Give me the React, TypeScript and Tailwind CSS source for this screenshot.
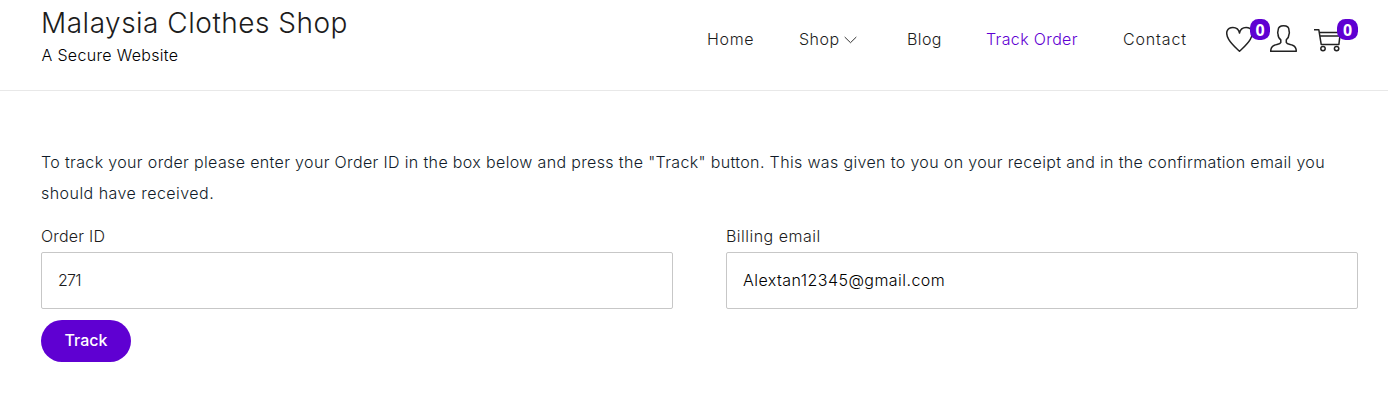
import type { ReactNode } from "react";

function CountBadge({ className, count }: { className: string; count: number }) {
  return (
    <span
      className={`absolute flex h-[21px] items-center justify-center rounded-[8.5px] bg-[#5f00d2] font-['Open_Sans',sans-serif] text-[16px] leading-none font-bold text-white ${className}`}
    >
      {count}
    </span>
  );
}

function IconLink({ label, className, children }: { label: string; className: string; children: ReactNode }) {
  return (
    <a href="#" aria-label={label} className={`relative block h-[28px] ${className}`}>
      {children}
    </a>
  );
}

function HeartIcon() {
  return (
    <svg width="28" height="28" viewBox="0 0 28 28" fill="none" stroke="#222" strokeWidth="1.5" strokeLinejoin="round">
      <path d="M13.5 26.3C10.4 23.2 5.4 19 2.7 14.3C.9 11.2.2 8.5 1.1 6.1C2 3.7 4.2 2.5 6.9 2.5C10.2 2.5 12.8 4.6 13.5 8.1C14.2 4.6 16.8 2.5 20.1 2.5C22.8 2.5 25 3.7 25.9 6.1C26.8 8.5 26.1 11.2 24.3 14.3C21.6 19 16.6 23.2 13.5 26.3Z" />
    </svg>
  );
}

function UserIcon() {
  return (
    <svg width="28" height="28" viewBox="0 0 28 28" fill="none" stroke="#222" strokeWidth="1.5" strokeLinejoin="round">
      <path d="M10.8 14.8C8.7 13.2 8 11 8 8.9C7.2 7.6 8.1 6.8 8.1 5.2C8.3 2.4 10.4.8 13.5.8C17 .8 19 2.4 19 5.2C19 6.8 19.8 7.6 19.1 8.9C19 11.4 18.1 13.2 16.3 14.8V17.4C17 19.4 20.2 19.2 22.6 20.2C25.5 21.4 26.3 23.6 26.3 26.3H.7C.7 23.6 1.5 21.4 4.4 20.2C6.8 19.2 10.1 19.4 10.8 17.4Z" />
    </svg>
  );
}

function CartIcon() {
  return (
    <svg width="28" height="28" viewBox="0 0 28 28" fill="none" stroke="#222" strokeWidth="1.5" strokeLinejoin="round">
      <path d="M0 4.7H4.8L7.2 19.4H24.9L26.3 7.5H5.4M5.9 11H26" />
      <circle cx="9" cy="23.6" r="2.2" />
      <circle cx="22.6" cy="23.6" r="2.2" />
    </svg>
  );
}

export default function App() {
  return (
    <div className="min-h-[401px] bg-white font-['Inter',sans-serif] text-[16px] font-light text-[#1c1c1c]">
      <header className="flex h-[91px] items-start border-b border-[#e8e8e8] pl-[41px]">
        <div className="w-[666px] pt-[7px]">
          <h1 className="text-[28px] leading-[33px] tracking-[0.5px]">Malaysia Clothes Shop</h1>
          <p className="mt-[5px] pl-[0.5px] leading-[21px] tracking-[0.32px] text-black">A Secure Website</p>
        </div>
        <nav className="flex pt-[27px] leading-[25px] whitespace-nowrap">
          <a href="#" className="w-[92px] tracking-[0.65px]">Home</a>
          <a href="#" className="flex w-[108px] items-center tracking-[0.5px]">
            Shop
            <svg className="ml-[4px]" width="13" height="8" viewBox="0 0 13 8" fill="none" stroke="#333" strokeWidth="1">
              <path d="M.7 1L6.5 6.7L12.3 1" />
            </svg>
          </a>
          <a href="#" className="w-[79px] tracking-[0.4px]">Blog</a>
          <a href="#" className="w-[137px] tracking-[0.35px] text-[#5f00d2]">Track Order</a>
          <a href="#" className="w-[103px] tracking-[0.85px]">Contact</a>
        </nav>
        <div className="flex pt-[25px]">
          <IconLink label="Wishlist" className="w-[44px]">
            <HeartIcon />
            <CountBadge className="-top-[6px] left-[24px] w-[20px]" count={0} />
          </IconLink>
          <IconLink label="Account" className="w-[44px]">
            <UserIcon />
          </IconLink>
          <IconLink label="Cart" className="w-[44px]">
            <CartIcon />
            <CountBadge className="-top-[6px] left-[23px] w-[21px]" count={0} />
          </IconLink>
        </div>
      </header>
      <main className="pt-[56px] pr-[30px] pl-[41px]">
        <p className="leading-[31px] whitespace-nowrap text-[#101b29]">
          <span className="block tracking-[0.353px]">
            To track your order please enter your Order ID in the box below and press the "Track" button. This was given to you on your receipt and in the confirmation email you
          </span>
          <span className="block tracking-[0.46px]">should have received.</span>
        </p>
        <form className="mt-[15px]">
          <div className="flex justify-between">
            <div className="w-[632px]">
              <label htmlFor="order-id" className="block h-[28px] leading-[25px] tracking-[0.2px]">Order ID</label>
              <input
                id="order-id"
                defaultValue="271"
                className="block h-[57px] w-full rounded-[2px] border border-[#c7c7c7] px-[16px] pb-[2px] tracking-[-0.8px] outline-none"
              />
            </div>
            <div className="w-[632px]">
              <label htmlFor="billing-email" className="block h-[28px] leading-[25px] tracking-[0.48px]">Billing email</label>
              <input
                id="billing-email"
                defaultValue="Alextan12345@gmail.com"
                className="block h-[57px] w-full rounded-[2px] border border-[#c7c7c7] px-[16px] pb-[2px] tracking-[0.45px] text-black outline-none"
              />
            </div>
          </div>
          <button type="button" className="mt-[11px] h-[42px] w-[90px] rounded-full bg-[#5f00d2] pb-[2px] text-[16px] font-medium text-white">
            Track
          </button>
        </form>
      </main>
    </div>
  );
}
